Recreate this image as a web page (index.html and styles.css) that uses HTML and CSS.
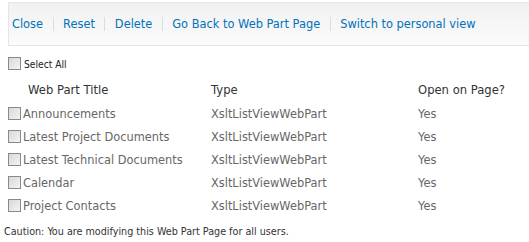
FILE: index.html
```html
<!DOCTYPE html>
<html lang="en">
<head>
  <meta charset="UTF-8">
  <title>Web Part Page Maintenance</title>
  <link rel="stylesheet" href="styles.css">
</head>
<body>
  <div class="toolbar">
    <a href="#">Close</a><span class="sep"></span>
    <a href="#">Reset</a><span class="sep"></span>
    <a href="#">Delete</a><span class="sep"></span>
    <a href="#">Go Back to Web Part Page</a><span class="sep"></span>
    <a href="#">Switch to personal view</a>
  </div>

  <label class="select-all"><input type="checkbox">Select All</label>

  <table class="parts">
    <thead>
      <tr>
        <th class="col-title">Web Part Title</th>
        <th class="col-type">Type</th>
        <th>Open on Page?</th>
      </tr>
    </thead>
    <tbody>
      <tr><td><input type="checkbox">Announcements</td><td>XsltListViewWebPart</td><td>Yes</td></tr>
      <tr><td><input type="checkbox">Latest Project Documents</td><td>XsltListViewWebPart</td><td>Yes</td></tr>
      <tr><td><input type="checkbox">Latest Technical Documents</td><td>XsltListViewWebPart</td><td>Yes</td></tr>
      <tr><td><input type="checkbox">Calendar</td><td>XsltListViewWebPart</td><td>Yes</td></tr>
      <tr><td><input type="checkbox">Project Contacts</td><td>XsltListViewWebPart</td><td>Yes</td></tr>
    </tbody>
  </table>

  <div class="caution">Caution: You are modifying this Web Part Page for all users.</div>
</body>
</html>
```

FILE: styles.css
```css
body { margin: 2px 0 0 0; font-family: 'DejaVu Sans', Verdana, sans-serif; font-size: 11.4px; color: #676767; background: #fff; }
.toolbar { margin-left: 8px; height: 42px; display: flex; align-items: center; padding-left: 3px; border: 1px solid #e6e6e6; border-right: none; background: linear-gradient(#f1f1f1, #fbfbfb); }
.toolbar a { color: #0072bc; text-decoration: none; font-size: 11.4px; }
.sep { display: inline-block; width: 1px; height: 14px; background: #dcdcdc; margin: 0 9.5px; }
input[type=checkbox] { appearance: none; width: 13px; height: 13px; margin: 0 2px 0 0; border: 1px solid #8a8a8a; background: linear-gradient(135deg, #d8d8d8, #f4f4f4); vertical-align: -2px; box-sizing: border-box; }
.select-all { display: block; margin: 11px 0 0 8px; font-family: 'DejaVu Sans Condensed', Tahoma, sans-serif; font-size: 10.2px; color: #222; }
.select-all input { margin-right: 3px; }
.parts { border-collapse: collapse; margin: 7px 0 0 0; }
.parts th { font-weight: normal; color: #333; text-align: left; height: 25px; padding: 0; font-size: 11.6px; }
.parts th.col-title { padding-left: 28px; width: 183px; }
.parts th.col-type { width: 207px; }
.parts td { height: 23px; padding: 0; }
.parts td:first-child { padding-left: 8px; }
.caution { margin: 8px 0 0 4px; font-family: 'DejaVu Sans Condensed', Tahoma, sans-serif; font-size: 10.7px; color: #333; }
```
